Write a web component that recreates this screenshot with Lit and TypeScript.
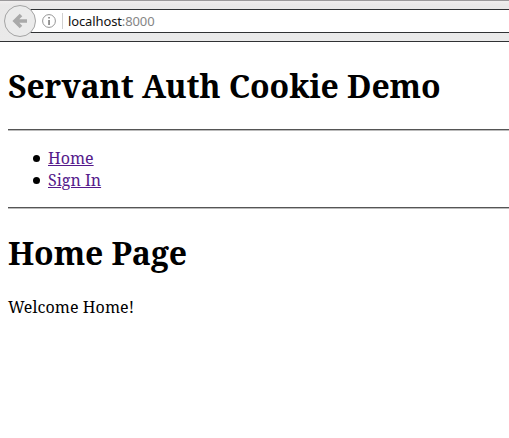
import { LitElement, html, css } from "lit";
import { customElement } from "lit/decorators.js";

@customElement("browser-bar")
class BrowserBar extends LitElement {
  static styles = css`
    :host {
      display: block;
      box-sizing: border-box;
      height: 42px;
      padding-top: 8px;
      border-top: 1px solid #9b999b;
      border-bottom: 1px solid #303234;
      background: linear-gradient(#f0eeee, #e9e8e8 4px, #eaeaea);
    }
    .field {
      position: relative;
      display: flex;
      align-items: center;
      box-sizing: border-box;
      height: 24px;
      margin-left: 20px;
      padding-left: 22px;
      border: solid #303234;
      border-width: 1px 0;
      background: #fff;
      font: 13px/22px "Noto Sans", sans-serif;
      letter-spacing: -0.12px;
      color: #858585;
    }
    .back {
      position: absolute;
      left: -17px;
      top: -6px;
    }
    .info {
      flex: none;
    }
    .rule {
      width: 1px;
      height: 16px;
      margin: 0 5px 0 6px;
      background: #d0d0d0;
    }
    .host {
      color: #111;
    }
    svg {
      display: block;
    }
  `;
  render() {
    return html`
      <div class="field">
        <svg class="back" width="34" height="34" viewBox="0 0 34 34">
          <circle cx="17" cy="17" r="15.5" fill="#ebebeb" stroke="#a4a4a4" />
          <path d="M18 11 L12 17 L18 23 M12.5 17 H24" fill="none" stroke="#a9a9a9" stroke-width="3.6" />
        </svg>
        <svg class="info" width="14" height="14" viewBox="0 0 14 14">
          <circle cx="7" cy="7" r="6.4" fill="none" stroke="#959595" />
          <path d="M6.2 3h1.7v1.6H6.2z M6.2 5.9h1.7v5.1H6.2z" fill="#858585" />
        </svg>
        <div class="rule"></div>
        <div><span class="host">localhost</span>:8000</div>
      </div>
    `;
  }
}

@customElement("app-root")
class AppRoot extends LitElement {
  static styles = css`
    :host {
      display: block;
      height: 438px;
      overflow: hidden;
      background: #fff;
      color: #000;
      font: 16px/22px "Noto Serif", "Droid Serif", "DejaVu Serif Condensed", "DejaVu Serif", serif;
    }
    main {
      padding: 22px 0 0 8px;
    }
    h1 {
      margin: 0;
      font-size: 32px;
      line-height: 44px;
      letter-spacing: -0.11px;
      white-space: nowrap;
    }
    hr {
      height: 0;
      margin: 21px 0 0;
      border: 0;
      border-top: 1px solid #555;
      border-bottom: 1px solid #bbb;
    }
    ul {
      margin: 16px 0;
      padding-left: 25px;
      list-style: none;
    }
    li {
      display: flex;
      align-items: center;
      gap: 8px;
    }
    li::before {
      content: "";
      width: 7px;
      height: 7px;
      border-radius: 50%;
      background: #000;
    }
    ul + hr {
      margin: 0 0 22px;
    }
    a {
      color: #551a8b;
    }
    p {
      margin: 21px 0 0;
      letter-spacing: 0.07px;
    }
  `;
  render() {
    return html`
      <browser-bar></browser-bar>
      <main>
        <h1>Servant Auth Cookie Demo</h1>
        <hr />
        <ul>
          <li><a href="#">Home</a></li>
          <li><a href="#">Sign In</a></li>
        </ul>
        <hr />
        <h1>Home Page</h1>
        <p>Welcome Home!</p>
      </main>
    `;
  }
}
